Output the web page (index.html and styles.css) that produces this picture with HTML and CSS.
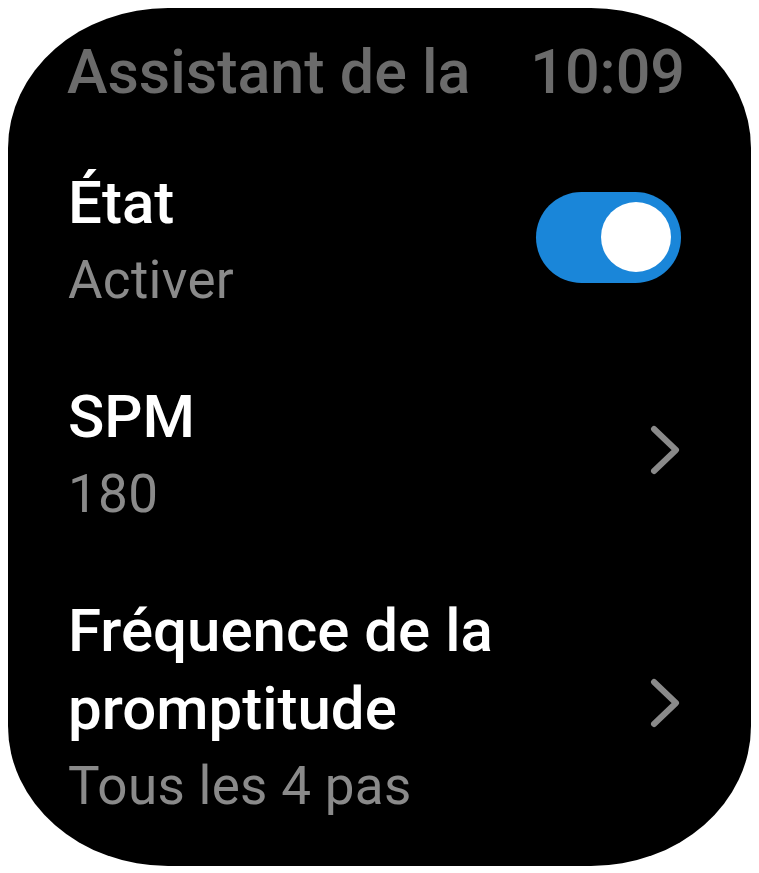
FILE: index.html
```html
<!DOCTYPE html>
<html lang="fr">
<head>
<meta charset="utf-8">
<title>Assistant de la cadence</title>
<link rel="stylesheet" href="styles.css">
</head>
<body>
<div class="screen">
  <div class="header">
    <span class="app-title">Assistant de la</span>
    <span class="clock">10:09</span>
  </div>
  <div class="list">
    <div class="row row-state">
      <div class="texts">
        <div class="title">État</div>
        <div class="sub">Activer</div>
      </div>
      <div class="toggle"><div class="knob"></div></div>
    </div>
    <div class="row">
      <div class="texts">
        <div class="title">SPM</div>
        <div class="sub">180</div>
      </div>
      <svg class="chevron" width="30" height="50" viewBox="0 0 30 50"><polyline points="4,4 26,25 4,46" fill="none" stroke="#8a8a8a" stroke-width="6" stroke-linecap="round" stroke-linejoin="round"/></svg>
    </div>
    <div class="row">
      <div class="texts">
        <div class="title">Fréquence de la<br>promptitude</div>
        <div class="sub">Tous les 4 pas</div>
      </div>
      <svg class="chevron" width="30" height="50" viewBox="0 0 30 50"><polyline points="4,4 26,25 4,46" fill="none" stroke="#8a8a8a" stroke-width="6" stroke-linecap="round" stroke-linejoin="round"/></svg>
    </div>
  </div>
</div>
</body>
</html>
```

FILE: styles.css
```css
html, body {
  margin: 0;
  padding: 0;
  background: #ffffff;
}
body {
  padding: 8px;
  font-family: Roboto, "Liberation Sans", sans-serif;
}
.screen {
  width: 743px;
  height: 858px;
  box-sizing: border-box;
  background: #000000;
  border-radius: 160px / 140px;
  padding: 28px 70px 0 61px;
  overflow: hidden;
}
.header {
  display: flex;
  justify-content: space-between;
  align-items: baseline;
  font-size: 61px;
  line-height: 72px;
  color: #6b6b6b;
  font-weight: 500;
  margin-right: -4px;
  margin-left: -2px;
}
.list {
  margin-top: 56px;
  display: flex;
  flex-direction: column;
  gap: 60px;
}
.row {
  display: flex;
  align-items: center;
  justify-content: space-between;
}
.title {
  font-size: 60px;
  line-height: 78px;
  font-weight: 500;
  color: #ffffff;
  margin-left: -1px;
}
.sub {
  font-size: 53px;
  line-height: 76px;
  font-weight: 400;
  color: #8a8a8a;
  letter-spacing: 0.3px;
  margin-left: -1px;
}
.toggle {
  width: 145px;
  height: 91px;
  border-radius: 46px;
  background: #1a86d9;
  display: flex;
  align-items: center;
  justify-content: flex-end;
  padding-right: 10px;
  box-sizing: border-box;
  margin-bottom: 8px;
}
.knob {
  width: 70px;
  height: 70px;
  border-radius: 50%;
  background: #ffffff;
}
.chevron {
  margin-right: 1px;
  margin-bottom: 10px;
}
```
